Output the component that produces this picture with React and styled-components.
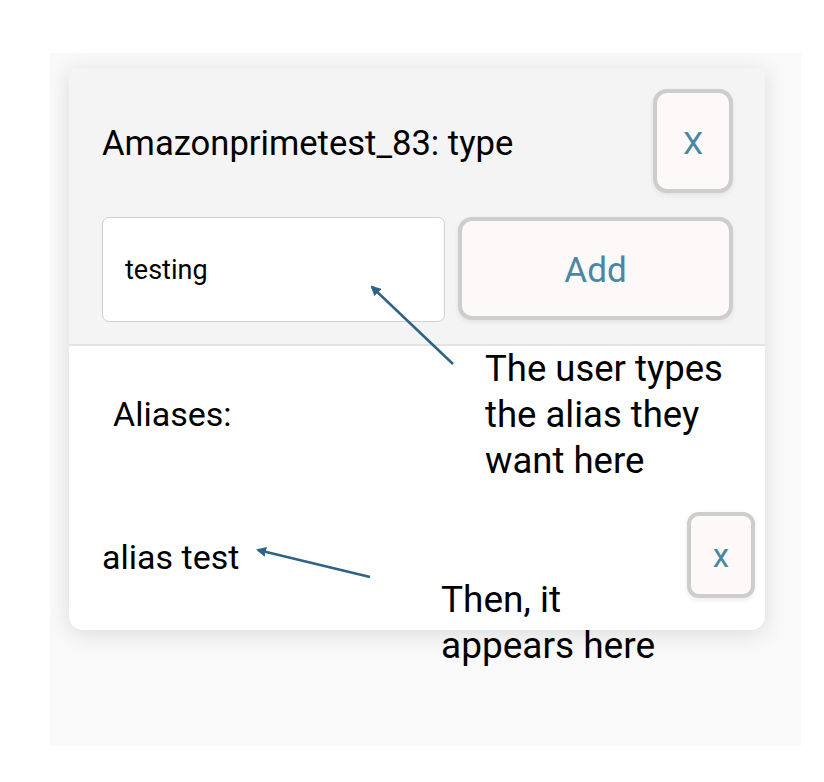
import styled, { createGlobalStyle } from "styled-components";

const GlobalStyle = createGlobalStyle`
  body {
    margin: 0;
    background: #ffffff;
    font-family: Roboto, "Liberation Sans", sans-serif;
  }
  * {
    box-sizing: border-box;
  }
`;

const Panel = styled.div`
  position: relative;
  margin: 53px 0 0 50px;
  width: 751px;
  height: 693px;
  padding: 15px 0 0 19px;
  background: #f9f9f9;
`;

const Card = styled.div`
  width: 696px;
  height: 562px;
  background: #ffffff;
  border-radius: 0 0 14px 14px;
  box-shadow: 0 4px 22px rgba(0, 0, 0, 0.12);
  overflow: hidden;
  display: flex;
  flex-direction: column;
`;

const Header = styled.div`
  display: flex;
  flex-direction: column;
  gap: 24px;
  padding: 21px 32px 22px 33px;
  background: #f4f4f4;
  border-bottom: 2px solid #e3e3e3;
`;

const TitleRow = styled.div`
  display: flex;
  align-items: center;
  justify-content: space-between;
  height: 104px;
`;

const Title = styled.h2`
  margin: 0;
  padding-top: 4px;
  font-size: 34.6px;
  font-weight: 400;
  color: #000;
`;

const SoftButton = styled.button`
  display: flex;
  align-items: center;
  justify-content: center;
  padding: ${(p) => p.$drop || 0}px 0 0;
  font-family: Roboto, "Liberation Sans", sans-serif;
  font-weight: 400;
  color: #4a87a3;
  background: #fdf9f8;
  border: 4px solid #cdcdcd;
  border-radius: ${(p) => p.$radius || 14}px;
  box-shadow: 0 2px 5px rgba(0, 0, 0, 0.08);
  width: ${(p) => p.$w}px;
  height: ${(p) => p.$h}px;
  font-size: ${(p) => p.$size}px;
  flex: ${(p) => (p.$grow ? 1 : "none")};
`;

const InputRow = styled.div`
  display: flex;
  gap: 13px;
  height: 105px;
`;

const AliasInput = styled.input`
  width: 343px;
  height: 105px;
  padding: 0 0 0 22px;
  font-family: Roboto, "Liberation Sans", sans-serif;
  font-size: 27px;
  color: #000;
  background: #ffffff;
  border: 1.5px solid #cfcfcf;
  border-radius: 7px;
  outline: none;
`;

const Body = styled.div`
  display: flex;
  flex-direction: column;
  padding: 48px 10px 0 33px;
`;

const Label = styled.div`
  margin-left: 11px;
  font-size: 34px;
  line-height: 40px;
  color: #000;
`;

const AliasRow = styled.div`
  display: flex;
  align-items: center;
  justify-content: space-between;
  margin-top: 78px;
`;

const AliasName = styled.span`
  padding-top: 3px;
  font-size: 34px;
  color: #000;
`;

const Note = styled.div`
  position: absolute;
  left: ${(p) => p.$x}px;
  top: ${(p) => p.$y}px;
  font-family: Roboto, "Liberation Sans", sans-serif;
  font-size: ${(p) => p.$size}px;
  line-height: 46px;
  color: #000;
  white-space: nowrap;
`;

const Arrows = styled.svg`
  position: absolute;
  left: 0;
  top: 0;
  pointer-events: none;
`;

export default function App() {
  return (
    <>
      <GlobalStyle />
      <Panel>
        <Card>
          <Header>
            <TitleRow>
              <Title>Amazonprimetest_83: type</Title>
              <SoftButton $w={80} $h={104} $size={32} $drop={4}>X</SoftButton>
            </TitleRow>
            <InputRow>
              <AliasInput defaultValue="testing" />
              <SoftButton $grow $h={103} $size={35} $drop={4}>Add</SoftButton>
            </InputRow>
          </Header>
          <Body>
            <Label>Aliases:</Label>
            <AliasRow>
              <AliasName>alias test</AliasName>
              <SoftButton $w={68} $h={86} $size={33} $radius={12}>x</SoftButton>
            </AliasRow>
          </Body>
        </Card>

        <Arrows width="751" height="693">
          <defs>
            <marker id="head" markerWidth="10" markerHeight="10" refX="8" refY="5" orient="auto" markerUnits="userSpaceOnUse">
              <path d="M0 0 L10 5 L0 10 Z" fill="#2d6383" />
            </marker>
          </defs>
          <line x1="403" y1="311" x2="322" y2="234" stroke="#2d6383" strokeWidth="2.5" markerEnd="url(#head)" />
          <line x1="320" y1="524" x2="208" y2="497" stroke="#2d6383" strokeWidth="2.5" markerEnd="url(#head)" />
        </Arrows>

        <Note $x={435} $y={293} $size={36.5}>
          The user types
          <br />
          the alias they
          <br />
          want here
        </Note>
        <Note $x={391} $y={524} $size={37}>
          Then, it
          <br />
          appears here
        </Note>
      </Panel>
    </>
  );
}
